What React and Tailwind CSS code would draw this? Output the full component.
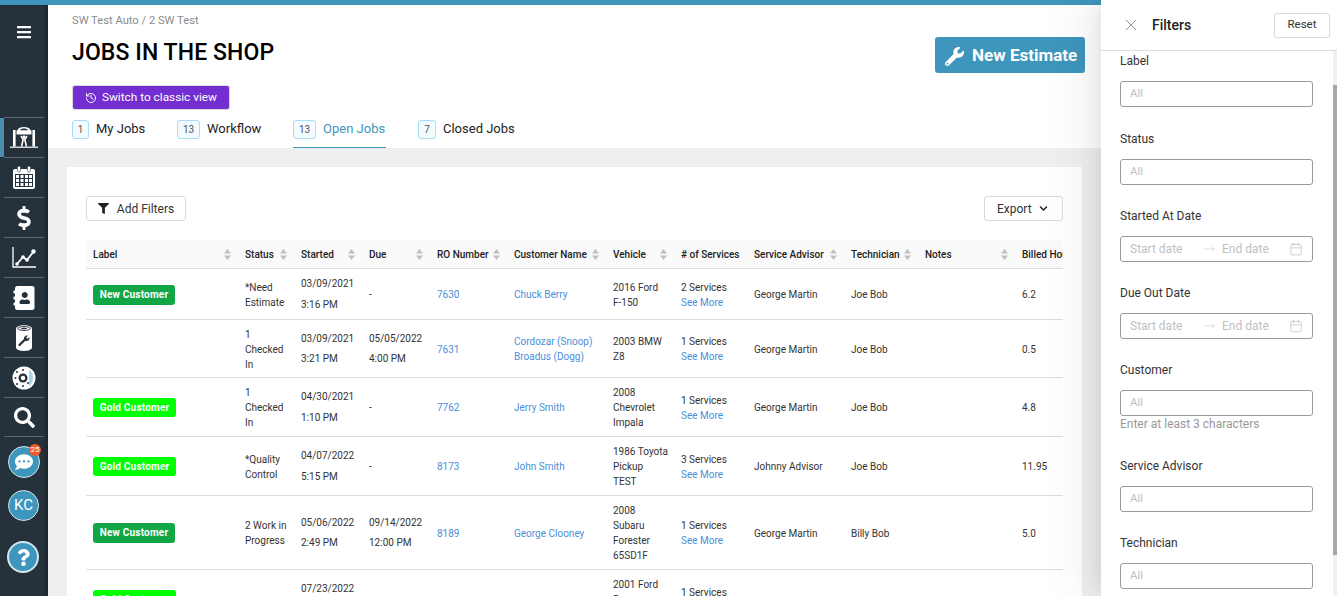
import { FaBars, FaDollarSign, FaAddressBook, FaSearch, FaCommentDots, FaQuestion, FaWrench, FaFilter, FaChevronDown } from "react-icons/fa";
import { History, X, Calendar, MoveRight } from "lucide-react";

const LiftIcon = () => (
  <svg width="28" height="21" viewBox="0 0 28 21" fill="white">
    <path d="M7.500 3C8.500 1 10.500 0 14 0s5.500 1 6.500 3l1 .8V7.500h-15V3.800z" />
    <path d="M9.800 3.300C10.500 2.200 12 1.600 14 1.600s3.500.6 4.200 1.700z" fill="#25323c" />
    <rect x="3" y="3" width="2.600" height="16.500" />
    <rect x="22.400" y="3" width="2.600" height="16.500" />
    <rect x="0" y="19.600" width="28" height="1.200" />
    <path d="M11 9l2.200 3.500-1.700 7M17 9l-2.200 3.500 1.700 7" fill="none" stroke="white" strokeWidth="1.600" />
    <circle cx="14" cy="10" r="1.400" />
  </svg>
);

const CalendarIcon = () => (
  <svg width="22" height="23" viewBox="0 0 22 23" fill="white">
    <rect x="0" y="3" width="22" height="20" rx="2" />
    <rect x="4.500" y="0" width="3" height="6" rx="1.500" stroke="#25323c" strokeWidth=".6" />
    <rect x="14.500" y="0" width="3" height="6" rx="1.500" stroke="#25323c" strokeWidth=".6" />
    <path d="M2 8h18v13H2z" fill="#25323c" />
    <path d="M3 9h3v3H3zM7.500 9h3v3h-3zM12 9h3v3h-3zM16 9h3v3h-3zM3 13h3v3H3zM7.500 13h3v3h-3zM12 13h3v3h-3zM16 13h3v3h-3zM3 17h3v3H3zM7.500 17h3v3h-3zM12 17h3v3h-3zM16 17h3v3h-3z" />
  </svg>
);

const ChartIcon = () => (
  <svg width="24" height="21" viewBox="0 0 24 21" fill="white">
    <path d="M1 0v20h23" fill="none" stroke="white" strokeWidth="1.300" />
    <path d="M5 17l6-7 4 3 7-9" fill="none" stroke="white" strokeWidth="1.800" />
    <circle cx="5" cy="17" r="1.800" />
    <circle cx="11" cy="10" r="1.800" />
    <circle cx="15" cy="13" r="1.800" />
    <circle cx="21.500" cy="4.500" r="2.200" />
  </svg>
);

const OilFilterIcon = () => (
  <svg width="16" height="26" viewBox="0 0 16 26" fill="white">
    <path d="M0 4C0 -1 16 -1 16 4V22.500c0 4.500-16 4.500-16 0z" />
    <ellipse cx="8" cy="3.500" rx="6.200" ry="1.900" fill="none" stroke="#25323c" strokeWidth="1" />
    <ellipse cx="8" cy="3.500" rx="3.200" ry=".7" fill="#25323c" />
    <path d="M3.500 20l6-6" stroke="#25323c" strokeWidth="2.300" strokeLinecap="round" />
    <path d="M8 14.500c-.6-2.500 1.200-4.500 4-4l-1.800 2 1.300 1.300 2-1.800c.5 2.800-1.500 4.600-4 4z" fill="#25323c" />
  </svg>
);

const DiscIcon = () => (
  <svg width="24" height="24" viewBox="0 0 24 24">
    <circle cx="12" cy="12" r="11.500" fill="white" />
    <circle cx="11" cy="12" r="4.500" fill="#25323c" />
    <circle cx="11" cy="12" r="2.200" fill="white" />
    <path d="M17 3.500a11 11 0 0 1 0 17z" fill="#a9d3e8" />
    <g fill="#25323c">
      <circle cx="5" cy="6" r="1" />
      <circle cx="11" cy="4" r="1" />
      <circle cx="3.500" cy="12" r="1" />
      <circle cx="5" cy="18" r="1" />
      <circle cx="11" cy="20" r="1" />
      <circle cx="16" cy="17" r="1" />
    </g>
  </svg>
);

const navItems = [
  { icon: <LiftIcon />, active: true },
  { icon: <CalendarIcon /> },
  { icon: <FaDollarSign size={24} color="white" /> },
  { icon: <ChartIcon /> },
  { icon: <FaAddressBook size={24} color="white" className="-scale-x-100" /> },
  { icon: <OilFilterIcon /> },
  { icon: <DiscIcon /> },
  { icon: <FaSearch size={21} color="white" /> },
];

const Sidebar = () => (
  <aside className="w-12 shrink-0 bg-[#25323c] flex flex-col shadow-[inset_-4px_0_4px_-2px_rgba(0,0,0,0.3)]">
    <div className="h-[112px] flex justify-center pt-[19px]">
      <FaBars size={16} color="white" />
    </div>
    {navItems.map((item, i) => (
      <div key={i} className="flex h-10">
        <div className={item.active ? "w-1 bg-[#4a8fb0] mt-px" : "w-1"} />
        <div className={"w-10 border-t border-[#5d6870] flex items-center justify-center " + (i === 7 ? "border-b" : "")}>
          {item.icon}
        </div>
      </div>
    ))}
    <div className="relative mt-[9px] ml-2 w-8 h-8 rounded-full bg-[#3e96bc] border border-[#d5e6ee] flex items-center justify-center">
      <FaCommentDots size={18} color="white" />
      <span className="absolute -top-[3px] -right-[2px] w-3 h-3 rounded-full bg-[#f4582a] text-white text-[8px] leading-3 text-center">25</span>
    </div>
    <div className="mt-3 ml-2 w-[31px] h-[31px] rounded-full bg-[#3e96bc] border border-[#d5e6ee] text-white text-[15px] flex items-center justify-center">KC</div>
    <div className="mt-5 ml-[7px] w-8 h-8 rounded-full bg-[#3e96bc] border-2 border-[#d5e6ee] flex items-center justify-center">
      <FaQuestion size={17} color="white" />
    </div>
  </aside>
);

const tabs = [
  { count: 1, label: "My Jobs", badge: "w-[17px]", box: "w-[105px]" },
  { count: 13, label: "Workflow", badge: "w-[23px]", box: "w-[116px]" },
  { count: 13, label: "Open Jobs", badge: "w-[23px]", box: "w-[93px] mr-8 border-b border-[#3e96bc]", active: true },
  { count: 7, label: "Closed Jobs", badge: "w-[18px]", box: "" },
];

const Header = () => (
  <header className="h-[143px] shrink-0 bg-white pl-6 pr-[252px] flex justify-between">
    <div className="flex flex-col">
      <div className="mt-2 h-4 text-[11.200px] leading-4 text-[#8c8c8c]">SW Test Auto / 2 SW Test</div>
      <h1 className="mt-[9px] h-[30px] text-[23px] leading-[30px] font-medium tracking-[0.1px] text-black">JOBS IN THE SHOP</h1>
      <button className="mt-[17px] w-[158px] h-[25px] rounded-[3px] bg-[#722ed1] border border-[#d9d9d9] text-white text-[11.800px] flex items-center pl-3 gap-[5px]">
        <History size={12} />
        Switch to classic view
      </button>
      <nav className="mt-[10px] h-[28px] flex">
        {tabs.map((t) => (
          <div key={t.label} className={"flex items-start gap-[7px] h-[28px] " + t.box}>
            <span className={t.badge + " h-[19px] rounded-[3px] border border-[#a8def5] bg-[#f2fbff] text-[10px] leading-[17px] text-center text-[#555]"}>{t.count}</span>
            <span className={"text-[13px] leading-[18px] " + (t.active ? "text-[#3e96bc]" : "text-[#222]")}>{t.label}</span>
          </div>
        ))}
      </nav>
    </div>
    <button className="mt-8 w-[150px] h-9 pt-[2px] rounded-[3px] bg-[#3e96bc] text-white text-[17px] font-bold flex items-center pl-[10px] gap-2">
      <FaWrench size={19} />
      New Estimate
    </button>
  </header>
);

const columns = [
  { name: "Label", w: "w-[152px]", sort: true },
  { name: "Status", w: "w-[56px]", sort: true },
  { name: "Started", w: "w-[68px]", sort: true },
  { name: "Due", w: "w-[68px]", sort: true },
  { name: "RO Number", w: "w-[77px]", sort: true },
  { name: "Customer Name", w: "w-[99px]", sort: true },
  { name: "Vehicle", w: "w-[68px]", sort: true },
  { name: "# of Services", w: "w-[73px]" },
  { name: "Service Advisor", w: "w-[97px]", sort: true },
  { name: "Technician", w: "w-[74px]", sort: true },
  { name: "Notes", w: "w-[97px]", sort: true },
  { name: "Billed Hours", w: "w-[100px]" },
];

const rows = [
  { h: "h-[51px]", tag: "new", status: ["*Need", "Estimate"], started: ["03/09/2021", "3:16 PM"], due: null, ro: 7630, customer: ["Chuck Berry"], vehicle: ["2016 Ford", "F-150"], services: "2 Services", advisor: "George Martin", tech: "Joe Bob", hours: "6.2" },
  { h: "h-[58px]", status: ["1", "Checked", "In"], started: ["03/09/2021", "3:21 PM"], due: ["05/05/2022", "4:00 PM"], ro: 7631, customer: ["Cordozar (Snoop)", "Broadus (Dogg)"], vehicle: ["2003 BMW", "Z8"], services: "1 Services", advisor: "George Martin", tech: "Joe Bob", hours: "0.5" },
  { h: "h-[59px]", tag: "gold", status: ["1", "Checked", "In"], started: ["04/30/2021", "1:10 PM"], due: null, ro: 7762, customer: ["Jerry Smith"], vehicle: ["2008", "Chevrolet", "Impala"], services: "1 Services", advisor: "George Martin", tech: "Joe Bob", hours: "4.8" },
  { h: "h-[59px]", tag: "gold", status: ["*Quality", "Control"], started: ["04/07/2022", "5:15 PM"], due: null, ro: 8173, customer: ["John Smith"], vehicle: ["1986 Toyota", "Pickup", "TEST"], services: "3 Services", advisor: "Johnny Advisor", tech: "Joe Bob", hours: "11.95" },
  { h: "h-[74px]", tag: "new", status: ["2 Work in", "Progress"], started: ["05/06/2022", "2:49 PM"], due: ["09/14/2022", "12:00 PM"], ro: 8189, customer: ["George Clooney"], vehicle: ["2008", "Subaru", "Forester", "65SD1F"], services: "1 Services", advisor: "George Martin", tech: "Billy Bob", hours: "5.0" },
  { h: "h-[59px]", tag: "gold", status: [], started: ["07/23/2022", "1:05 PM"], due: null, ro: 8201, customer: [], vehicle: ["2001 Ford", "Focus", "SE"], services: "1 Services", advisor: "", tech: "", hours: "" },
];

const SortCarets = () => (
  <svg width="7" height="11" viewBox="0 0 7 11" fill="#bfbfbf" className="shrink-0">
    <path d="M3.500 0L7 4.500H0z" />
    <path d="M3.500 11L0 6.500h7z" />
  </svg>
);

const Tag = ({ kind }) =>
  kind === "new" ? (
    <span className="block w-[82px] h-5 rounded-[3px] bg-[#13a647] text-white text-[10px] font-bold tracking-[0.2px] leading-5 text-center">New Customer</span>
  ) : (
    <span className="block w-[83px] h-[19px] rounded-[3px] bg-[#00ff00] text-white text-[10px] font-bold tracking-[0.2px] leading-[19px] text-center">Gold Customer</span>
  );

const Lines = ({ items }) =>
  items.map((line) => (
    <div key={line} className="whitespace-nowrap">
      {line}
    </div>
  ));

const DateCell = ({ value }) =>
  value ? (
    <div className="leading-[20.500px]">
      <Lines items={value} />
    </div>
  ) : (
    "-"
  );

const cell = "px-[7px] pt-[2px]";

const JobsTable = () => (
  <div className="overflow-hidden">
    <table className="w-[929px] table-fixed border-collapse text-[10px] leading-[15px] text-[#333]">
      <colgroup>
        {columns.map((c) => (
          <col key={c.name} className={c.w} />
        ))}
      </colgroup>
      <thead>
        <tr className="h-7 bg-[#fafafa] border-b border-[#ddd]">
          {columns.map((c) => (
            <th key={c.name} className="px-[7px] pt-[2px] font-medium text-[#222] text-left whitespace-nowrap">
              <div className="flex items-center justify-between">
                <span>{c.name}</span>
                {c.sort && <SortCarets />}
              </div>
            </th>
          ))}
        </tr>
      </thead>
      <tbody>
        {rows.map((r) => (
          <tr key={r.ro} className={r.h + " border-b border-[#ddd]"}>
            <td className={cell}>{r.tag && <Tag kind={r.tag} />}</td>
            <td className={cell}><Lines items={r.status} /></td>
            <td className={cell}><DateCell value={r.started} /></td>
            <td className={cell}><DateCell value={r.due} /></td>
            <td className={cell + " text-[#4a90d9]"}>{r.customer.length ? r.ro : ""}</td>
            <td className={cell + " text-[#4a90d9]"}><Lines items={r.customer} /></td>
            <td className={cell}><Lines items={r.vehicle} /></td>
            <td className={cell}>
              <div>{r.services}</div>
              <div className="text-[#4a90d9]">See More</div>
            </td>
            <td className={cell}>{r.advisor}</td>
            <td className={cell}>{r.tech}</td>
            <td className={cell}></td>
            <td className={cell}>{r.hours}</td>
          </tr>
        ))}
      </tbody>
    </table>
  </div>
);

const JobsCard = () => (
  <section className="bg-[#efefef] flex-1 min-h-0 pt-[19px] pl-[19px] pr-[255px]">
    <div className="bg-white h-full px-[19px] pt-[29px]">
      <div className="flex justify-between mb-[19px]">
        <button className="w-[100px] h-[25px] rounded-[3px] border border-[#d9d9d9] text-[12px] text-[#333] flex items-center justify-center gap-2">
          <FaFilter size={11} color="#222" />
          Add Filters
        </button>
        <button className="w-[79px] h-[25px] rounded-[3px] border border-[#d9d9d9] text-[12px] text-[#333] flex items-center pl-3 gap-[7px]">
          Export
          <FaChevronDown size={9} color="#222" />
        </button>
      </div>
      <JobsTable />
    </div>
  </section>
);

const SelectField = ({ label, help, first }) => (
  <div className={first ? "mb-6" : "mb-[23px]"}>
    <div className="h-4 text-[12px] leading-[17px] text-[#333] mb-3">{label}</div>
    <div className="h-[26px] rounded-[3px] border border-[#999] pl-[9px] text-[11.500px] leading-[22px] text-[#bfbfbf]">All</div>
    {help && <div className="h-[19px] text-[12px] leading-4 text-[#999]">{help}</div>}
  </div>
);

const DateField = ({ label }) => (
  <div className="mb-[23px]">
    <div className="h-4 text-[12px] leading-[17px] text-[#333] mb-3">{label}</div>
    <div className="h-[26px] rounded-[3px] border border-[#999] pl-[9px] pr-[9px] pb-px text-[12px] text-[#bfbfbf] flex items-center">
      <span className="w-[73px]">Start date</span>
      <MoveRight size={12} strokeWidth={1} className="mr-[7px]" />
      <span className="flex-1">End date</span>
      <Calendar size={14} strokeWidth={1.200} />
    </div>
  </div>
);

const FiltersDrawer = () => (
  <aside className="absolute top-0 right-0 bottom-0 w-[236px] bg-white flex flex-col shadow-[-6px_0_16px_-8px_rgba(0,0,0,0.08),-9px_0_28px_0_rgba(0,0,0,0.05),-12px_0_48px_16px_rgba(0,0,0,0.03)]">
    <div className="h-[51px] shrink-0 border-b border-[#ddd] flex items-center pl-5 pr-[7px]">
      <X size={20} strokeWidth={1.100} color="#888" />
      <span className="ml-[11px] text-[14px] font-medium text-[#222] flex-1">Filters</span>
      <button className="w-14 h-[25px] rounded-[3px] border border-[#d9d9d9] text-[11.500px] text-[#333]">Reset</button>
    </div>
    <div className="relative flex-1 min-h-0 overflow-hidden pt-[2px] pl-[19px] pr-6">
      <SelectField label="Label" first />
      <SelectField label="Status" />
      <DateField label="Started At Date" />
      <DateField label="Due Out Date" />
      <SelectField label="Customer" help="Enter at least 3 characters" />
      <SelectField label="Service Advisor" />
      <SelectField label="Technician" />
      <div className="absolute top-0 bottom-0 right-0 w-1 bg-[#f1f1f1]">
        <div className="mt-[34px] h-[470px] bg-[#a8a8a8]" />
      </div>
    </div>
  </aside>
);

export default function App() {
  return (
    <div className="relative w-[1337px] h-[596px] overflow-hidden flex flex-col bg-white font-['Roboto',sans-serif]">
      <div className="h-[5px] shrink-0 bg-[#3e96bc]" />
      <div className="flex flex-1 min-h-0">
        <Sidebar />
        <main className="flex-1 min-w-0 flex flex-col">
          <Header />
          <JobsCard />
        </main>
      </div>
      <FiltersDrawer />
    </div>
  );
}
